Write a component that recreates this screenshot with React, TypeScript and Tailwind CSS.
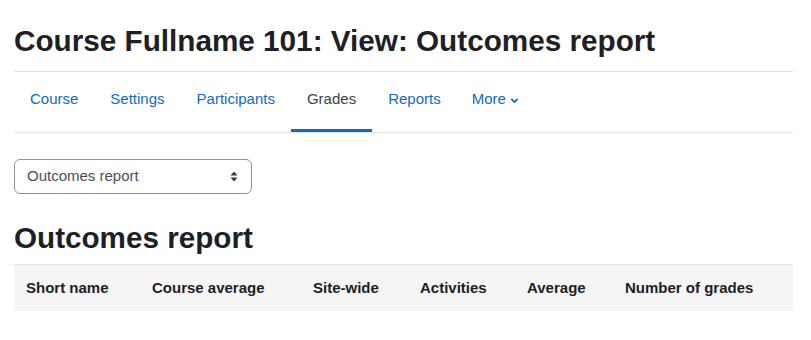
import React from 'react';

const tabs = ['Course', 'Settings', 'Participants', 'Grades', 'Reports'];

const columns = [
  { label: 'Short name', width: 'w-[126px]' },
  { label: 'Course average', width: 'w-[161px]' },
  { label: 'Site-wide', width: 'w-[107px]' },
  { label: 'Activities', width: 'w-[107px]' },
  { label: 'Average', width: 'w-[98px]' },
  { label: 'Number of grades', width: 'w-[180px]' },
];

const App: React.FC = () => {
  return (
    <div className="min-h-screen bg-white font-['Liberation_Sans',Arial,sans-serif] text-[#1d2125]">
      <div className="w-[779px] ml-[14px] pt-[23px]">
        <h1 className="text-[29.7px] leading-[36px] font-bold">Course Fullname 101: View: Outcomes report</h1>

        {/* Secondary navigation */}
        <nav className="mt-[12px] border-t border-b border-[#dee2e6] flex">
          {tabs.map((tab) => (
            <a
              key={tab}
              href="#"
              className={
                tab === 'Grades'
                  ? 'h-[60px] px-4 flex items-center text-[15px] text-[#3b4046] border-b-[3px] border-[#0f6cbf] pb-[2px]'
                  : 'h-[60px] px-4 flex items-center text-[15px] text-[#0f6cbf] border-b-[3px] border-transparent pb-[2px]'
              }
            >
              {tab}
            </a>
          ))}
          <a href="#" className="h-[60px] pl-4 pr-4 -ml-px flex items-center text-[15px] text-[#0f6cbf] border-b-[3px] border-transparent pb-[2px]">
            More
            <svg className="w-[9px] h-[9px] ml-[4px] mt-[2px]" viewBox="0 0 10 10" fill="none" stroke="currentColor" strokeWidth={2}>
              <path d="M1.5 3.2 5 6.7 8.5 3.2" />
            </svg>
          </a>
        </nav>

        {/* Report selector */}
        <div className="mt-[26px] w-[238px] h-[35px] border border-[#8f959e] rounded-[6px] flex items-center justify-between pl-[12px] pr-[13px] text-[15px] text-[#495057]">
          <span>Outcomes report</span>
          <svg className="w-[8px] h-[11px]" viewBox="0 0 8 11" fill="#343a40">
            <path d="M4 0.5 7.5 4.5H0.5Z" />
            <path d="M4 10.5 0.5 6.5H7.5Z" />
          </svg>
        </div>

        <h2 className="mt-[26px] text-[29.65px] leading-[36px] font-bold">Outcomes report</h2>

        <table className="mt-[8px] w-full border-collapse table-fixed">
          <thead>
            <tr className="bg-[#f5f5f5] border-t border-[#dee2e6]">
              {columns.map((c) => (
                <th key={c.label} className={`${c.width} h-[46px] px-3 text-left text-[15px] font-bold align-middle`}>
                  {c.label}
                </th>
              ))}
            </tr>
          </thead>
        </table>
      </div>
    </div>
  );
};

export default App;
